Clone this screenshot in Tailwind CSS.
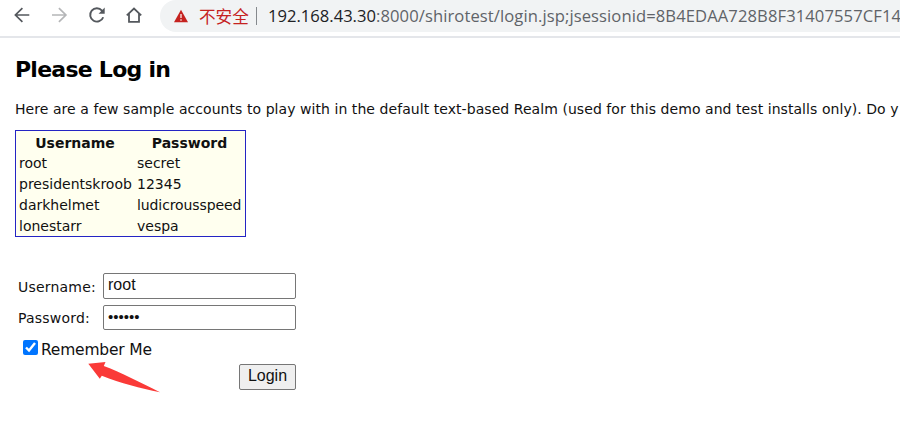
<!DOCTYPE html>
<html lang="en"><head><meta charset="utf-8"><title>Please Log in</title>
<script src="https://cdn.jsdelivr.net/npm/@tailwindcss/browser@4"></script></head>
<body class="h-[443px] w-[900px] overflow-hidden bg-white font-['DejaVu_Sans',sans-serif] text-[#111]">
<header class="flex h-[38px] items-start border-b-2 border-[#e4e6ea] whitespace-nowrap">
  <nav class="flex w-[160px] shrink-0 gap-[13px] pt-[3px] pl-[10px] text-[#54585d]">
    <svg class="h-6 w-6" viewBox="0 0 24 24" fill="none" stroke="currentColor" stroke-width="1.7"><path d="M19.3 12H5.5M12.4 5.2L5.4 12l7 6.8"/></svg>
    <svg class="ml-[1px] h-6 w-6 text-[#b5b6b8]" viewBox="0 0 24 24" fill="none" stroke="currentColor" stroke-width="1.7"><path d="M4 12h13.8M10.9 5.2l7 6.8l-7 6.8"/></svg>
    <svg class="h-6 w-6" viewBox="0 0 24 24" fill="none" stroke="currentColor" stroke-width="1.9"><path d="M18.2 14.2A6.7 6.7 0 1 1 17 7.6L18.3 9"/><path d="M19.7 4.6v6.1h-6.1z" fill="currentColor" stroke="none"/></svg>
    <svg class="h-6 w-6" viewBox="0 0 24 24" fill="none" stroke="currentColor" stroke-width="1.8"><path d="M4.8 12.3L12 5.6l7.2 6.7M7 10.8v8.1h10v-8.1"/></svg>
  </nav>
  <div class="flex h-8 grow items-center rounded-l-full bg-[#f1f3f4] font-['Open_Sans','Noto_Sans_CJK_SC',sans-serif] text-[16.6px]">
    <svg class="ml-[14px] h-[14px] w-[14px] shrink-0" viewBox="0 0 14 14"><path d="M7 .8L14 13.2H0z" fill="#c5221f"/><path d="M7 5v4M7 10.3v1.5" stroke="#f7dddc" stroke-width="1.4"/></svg>
    <span class="ml-[11px] w-[51px] shrink-0 font-['Noto_Sans_CJK_SC'] text-[16.6px] leading-[30px] font-normal text-[#c5221f]">不安全</span>
    <span class="ml-[6px] h-[18px] w-px shrink-0 bg-[#85898d]"></span>
    <span class="ml-[11px] leading-8 text-[#5f6368]"><span class="text-[#202124]">192.168.43.30</span><span class="tracking-[0.09px]">:8000/shirotest/login.jsp;jsessionid=8B4EDAA728B8F31407557CF14</span></span>
  </div>
</header>
<main class="pl-[15px]">
  <h1 class="mt-[17px] h-[30px] text-[22px] leading-[30px] font-bold tracking-[-0.75px] text-black whitespace-nowrap">Please Log in</h1>
  <p class="mt-[14px] h-5 text-[14px] leading-5 tracking-[0.06px] whitespace-nowrap">Here are a few sample accounts to play with in the default text-based Realm (used for this demo and test installs only). Do y</p>
  <table class="mt-[11px] h-[107px] w-[231px] table-fixed border-separate border-spacing-0 border border-[#2424c4] bg-[#ffffef] pt-[2px] text-[14px] leading-[20px] whitespace-nowrap">
    <colgroup><col class="w-[118px]"><col></colgroup>
    <thead><tr><th class="p-0 text-center">Username</th><th class="p-0 text-center">Password</th></tr></thead>
    <tbody>
      <tr><td class="p-0 pl-[3px]">root</td><td class="p-0 pl-[3px]">secret</td></tr>
      <tr><td class="p-0 pl-[3px]">presidentskroob</td><td class="p-0 pl-[3px]">12345</td></tr>
      <tr><td class="p-0 pl-[3px]">darkhelmet</td><td class="p-0 pl-[3px] tracking-[-0.1px]">ludicrousspeed</td></tr>
      <tr><td class="p-0 pl-[3px]">lonestarr</td><td class="p-0 pl-[3px]">vespa</td></tr>
    </tbody>
  </table>
  <form class="relative mt-9 w-[281px] text-[14px]">
    <div class="flex h-[26px]"><label for="u" class="w-[88px] shrink-0 pl-[3px] leading-[28px] tracking-[0.2px]">Username:</label><input id="u" value="root" class="h-[26px] w-[193px] rounded-[2px] border border-[#767676] px-1 pb-[2px] font-['Liberation_Sans',sans-serif] text-[16px]"></div>
    <div class="mt-[6px] flex h-[25px]"><label for="p" class="w-[88px] shrink-0 pl-[3px] leading-[27px] tracking-[0.2px]">Password:</label><input id="p" type="password" value="secret" class="h-[25px] w-[193px] rounded-[2px] border border-[#767676] px-1 pb-[2px] font-['Liberation_Sans',sans-serif] text-[15px]"></div>
    <label class="mt-2 flex h-[22px] pl-2 text-[15.5px] leading-[24px] tracking-[-0.2px]"><input type="checkbox" checked class="mt-[2px] mr-[3px] h-[15px] w-[15px] accent-[#0075ff]">Remember Me</label>
    <div class="mt-1 flex justify-end"><button type="button" class="h-[26px] w-[57px] rounded-[2px] border border-[#767676] bg-[#efefef] pb-[2px] font-['Liberation_Sans',sans-serif] text-[16px] leading-[22px]">Login</button></div>
    <svg class="absolute top-[87px] left-[72px] h-[34px] w-[76px]" viewBox="0 0 76 34"><path d="M1.3 3.8L18.5 2l-1.7 4.1C34 12.4 55 23.4 73 32.3C53 28 34 23.5 14.8 15.7L12.8 18.7z" fill="#fa3a38"/></svg>
  </form>
</main>
</body></html>
